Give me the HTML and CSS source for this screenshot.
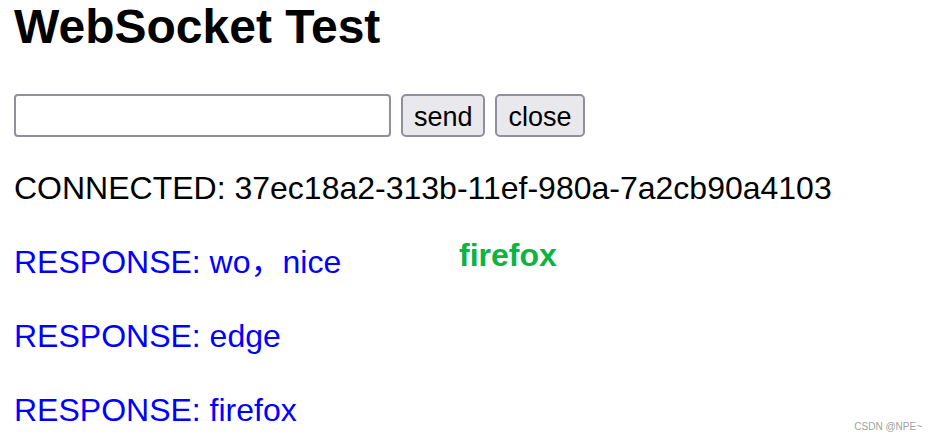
FILE: index.html
```html
<!DOCTYPE html>
<html>
<head>
<meta charset="utf-8">
<title>WebSocket Test</title>
<link rel="stylesheet" href="styles.css">
</head>
<body>
<div class="page">
  <h1 class="title">WebSocket Test</h1>
  <div class="controls">
    <input class="msg-input" type="text">
    <button class="btn btn-send">send</button>
    <button class="btn btn-close">close</button>
  </div>
  <div class="output">
    <p class="line">CONNECTED: 37ec18a2-313b-11ef-980a-7a2cb90a4103</p>
    <p class="line response">RESPONSE: wo，nice</p>
    <p class="line response">RESPONSE: edge</p>
    <p class="line response">RESPONSE: firefox</p>
  </div>
  <span class="note">firefox</span>
  <span class="watermark">CSDN @NPE~</span>
</div>
</body>
</html>
```
FILE: styles.css
```css
html, body {
  margin: 0;
  padding: 0;
  background: #ffffff;
}

.page {
  position: relative;
  width: 936px;
  height: 442px;
  box-sizing: border-box;
  padding: 1px 14px 0;
  display: flex;
  flex-direction: column;
  font-family: "Liberation Sans", "Noto Sans CJK SC", Arial, sans-serif;
  color: #000;
  overflow: hidden;
}

.title {
  margin: 0;
  font-size: 48px;
  line-height: 52px;
  font-weight: bold;
}

.controls {
  margin-top: 41px;
  display: flex;
  align-items: center;
  gap: 10px;
}

.msg-input {
  width: 377px;
  height: 43px;
  box-sizing: border-box;
  margin: 0;
  border: 2px solid #8f8f9d;
  border-radius: 4px;
  background: #fff;
  font-size: 27px;
  padding: 0 6px;
}

.btn {
  height: 43px;
  box-sizing: border-box;
  margin: 0;
  border: 2px solid #8f8f9d;
  border-radius: 5px;
  background: #e9e9ed;
  color: #000;
  font-family: "Liberation Sans", Arial, sans-serif;
  font-size: 27px;
  padding: 4px 11px 0;
}

.btn-send { width: 84px; }
.btn-close { width: 90px; }

.output {
  margin-top: 33px;
  display: flex;
  flex-direction: column;
  gap: 37px;
}

.line {
  margin: 0;
  font-size: 32px;
  line-height: 37px;
}

.response {
  color: #0000ff;
}

.note {
  position: absolute;
  left: 459px;
  top: 237px;
  font-size: 32px;
  line-height: 37px;
  font-weight: bold;
  color: #0db343;
}

.watermark {
  position: absolute;
  right: 14px;
  bottom: 10px;
  font-size: 10px;
  color: #a0a0a0;
}
```
